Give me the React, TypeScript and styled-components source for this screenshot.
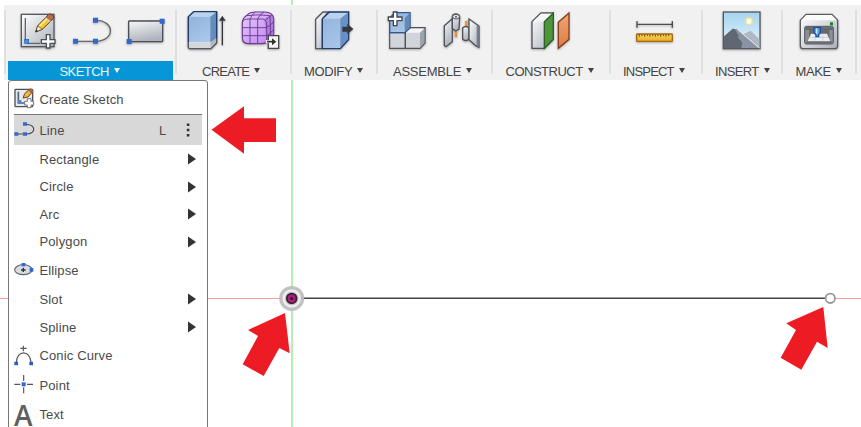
import React from 'react';
import styled, { createGlobalStyle } from 'styled-components';

const GlobalStyle = createGlobalStyle`
  * { box-sizing: border-box; }
  body { margin: 0; background: #fff; overflow: hidden; }
`;

const Workspace = styled.div`
  position: relative;
  width: 861px;
  height: 427px;
  padding: 5px 0 0 4px;
  overflow: hidden;
  background: #fff;
  font-family: 'Liberation Sans', Arial, sans-serif;
  font-size: 13px;
  color: #4a4a4a;
`;

const Drawing = styled.svg`
  position: absolute;
  inset: 0;
  width: 861px;
  height: 427px;
`;

const Toolbar = styled.header`
  position: relative;
  display: flex;
  height: 75px;
  background: #f1f1f1;
`;

const Group = styled.section<{ $width: number }>`
  display: flex;
  flex-direction: column;
  flex: none;
  width: ${(p) => p.$width}px;
  height: 75px;
`;

const Divider = styled.div`
  flex: none;
  width: 2px;
  height: 64px;
  margin-top: 5px;
  background: #dfdfdf;
`;

const IconRow = styled.div<{ $inset: number; $gap: number }>`
  display: flex;
  height: 56px;
  padding: 5px 0 0 ${(p) => p.$inset}px;
  gap: ${(p) => p.$gap}px;
`;

const ToolIcon = styled.svg`
  flex: none;
  width: 40px;
  height: 42px;
  overflow: visible;
  filter: drop-shadow(0 1px 1px rgba(0, 0, 0, 0.3));
`;

const GroupLabel = styled.div<{ $inset: number; $tracking: number; $active?: boolean }>`
  display: flex;
  align-items: center;
  gap: 5px;
  height: 19px;
  margin: 0 ${(p) => (p.$active ? 2 : 0)}px;
  padding: 2px 0 0 ${(p) => p.$inset}px;
  white-space: nowrap;
  letter-spacing: ${(p) => p.$tracking}px;
  color: ${(p) => (p.$active ? '#e8f7ff' : '#444')};
  background: ${(p) => (p.$active ? '#0696d7' : 'transparent')};
`;

const Caret = styled.span`
  width: 0;
  height: 0;
  margin-top: -3px;
  border: 3.5px solid transparent;
  border-top: 5px solid currentColor;
  border-bottom: 0;
`;

const Menu = styled.nav`
  position: absolute;
  left: 8px;
  top: 80px;
  width: 200px;
  height: 360px;
  padding: 0 5px;
  background: #fff;
  border: 1px solid #777;
  border-radius: 3px 3px 0 0;
`;

const MenuRow = styled.div<{ $height: number; $active?: boolean; $top?: number }>`
  display: flex;
  align-items: center;
  height: ${(p) => p.$height}px;
  padding-top: ${(p) => p.$top ?? 0}px;
  background: ${(p) => (p.$active ? '#d8d8d8' : 'transparent')};
`;

const Separator = styled.div`
  height: 1px;
  background: #777;
`;

const IconSlot = styled.span`
  display: flex;
  flex: none;
  width: 25px;
`;

const MenuIcon = styled.svg`
  width: 20px;
  height: 22px;
  overflow: visible;
`;

const ItemText = styled.span<{ $tracking: number }>`
  flex: 1;
  padding-left: 0.4px;
  letter-spacing: ${(p) => p.$tracking}px;
  white-space: nowrap;
`;

const Shortcut = styled.span`
  width: 23px;
`;

const RowEnd = styled.svg`
  flex: none;
  width: 20px;
  height: 16px;
`;

const Defs = () => (
  <defs>
    <linearGradient id="steel" x1="0" y1="0" x2="1" y2="1">
      <stop offset="0" stopColor="#fff" /><stop offset="1" stopColor="#a9afba" />
    </linearGradient>
    <linearGradient id="panel" x1="0" y1="0" x2="0.3" y2="1">
      <stop offset="0" stopColor="#f6f7f8" /><stop offset="1" stopColor="#aeb4be" />
    </linearGradient>
    <linearGradient id="blue" x1="0" y1="0" x2="0.6" y2="1">
      <stop offset="0" stopColor="#8fb2db" /><stop offset="1" stopColor="#a9c6e8" />
    </linearGradient>
    <linearGradient id="sky" x1="0" y1="0" x2="0" y2="1">
      <stop offset="0" stopColor="#a5d4ee" /><stop offset="1" stopColor="#e8f6fc" />
    </linearGradient>
    <linearGradient id="violet" x1="0" y1="0" x2="1" y2="1">
      <stop offset="0" stopColor="#e6cdfa" /><stop offset="1" stopColor="#bd80f2" />
    </linearGradient>
    <linearGradient id="orange" x1="0" y1="0" x2="0" y2="1">
      <stop offset="0" stopColor="#eda678" /><stop offset="1" stopColor="#dc7d43" />
    </linearGradient>
    <linearGradient id="gold" x1="0" y1="0" x2="0" y2="1">
      <stop offset="0" stopColor="#f8d45b" /><stop offset="1" stopColor="#e9ae1e" />
    </linearGradient>
  </defs>
);

const SketchIcon = () => (
  <ToolIcon viewBox="54 30 120 126">
    <rect x="64" y="43" width="98" height="97" fill="url(#steel)" stroke="#55585d" strokeWidth="4" />
    <path d="M76 54V122M80 130H120" stroke="#666" strokeWidth="4" />
    <rect x="74" y="118" width="12" height="12" fill="#3f92e0" stroke="#1c5fb0" strokeWidth="2" />
    <path d="M107 96L113 77L145 45L159 57L127 88Z" fill="#f4c430" stroke="#5c4522" strokeWidth="3" />
    <path d="M118 79L148 50" stroke="#ffe98d" strokeWidth="5" />
    <path d="M107 96L113 77L127 88Z" fill="#f4dfbc" stroke="#4b4131" strokeWidth="2" />
    <path d="M107 96L109 89L114 93Z" fill="#222" />
    <path d="M138 51L145 44Q149 39 157 45T159 57L152 64Z" fill="#b96f4b" stroke="#68442f" strokeWidth="3" />
    <path d="M137 53L151 65" stroke="#d9d9d9" strokeWidth="4" />
    <path d="M139 104H150V119H165V130H150V144H139V130H124V119H139Z" fill="#fff" stroke="#4d5054" strokeWidth="4" />
  </ToolIcon>
);
const LineIcon = () => (
  <ToolIcon viewBox="216 30 120 126">
    <path d="M227 124H287C346 124 346 61 287 61" fill="none" stroke="#65676a" strokeWidth="4" />
    <path d="M219 116h15v15h-15zM279 116h15v15h-15zM279 53h15v15h-15z" fill="#3267d1" />
  </ToolIcon>
);
const RectangleIcon = () => (
  <ToolIcon viewBox="378 30 120 126">
    <rect x="386" y="63" width="102" height="62" rx="2" fill="url(#panel)" stroke="#4d4f53" strokeWidth="4" />
    <path d="M479 56h15v15h-15zM380 117h15v15h-15z" fill="#3267d1" />
  </ToolIcon>
);
const ExtrudeIcon = () => (
  <ToolIcon viewBox="48 30 120 126">
    <path d="M55 50L71 35H140V129L123 146H59Q55 146 55 141Z" fill="#f3f4f5" stroke="#555" strokeWidth="3" />
    <path d="M55 127H121V144H59Q55 144 55 140Z" fill="#d4d7dc" />
    <path d="M121 50L140 35V129L121 146Z" fill="#b5bac1" />
    <path d="M55 50L71 35H140L121 50Z" fill="#bcd3ed" />
    <path d="M55 50H121V126H55Z" fill="url(#blue)" />
    <path d="M121 50L140 35V114L121 127Z" fill="#638dbe" />
    <path d="M55 126V50L71 35H140V114" fill="none" stroke="#203b67" strokeWidth="4" strokeLinejoin="round" />
    <path d="M55 126V141Q55 146 60 146H123L140 129V114" fill="none" stroke="#55585e" strokeWidth="4" />
    <path d="M157 136V56" stroke="#36383c" strokeWidth="4" />
    <path d="M147 62L157 47L167 62Z" fill="#36383c" />
  </ToolIcon>
);
const FormIcon = () => (
  <ToolIcon viewBox="210 30 120 126">
    <path d="M217 69Q217 54 232 45Q239 36 258 36H284Q308 36 311 56V103Q308 115 294 124Q288 131 276 131H237Q217 131 217 113Z" fill="url(#violet)" stroke="#6c3a8f" strokeWidth="3.5" />
    <path d="M283 57Q303 42 309 50L311 100Q307 115 290 126Z" fill="#a369d5" opacity=".6" />
    <path d="M217 67Q220 57 237 57H276Q290 57 290 75V115Q289 131 276 131M217 83H288Q304 77 311 64M217 107H290Q304 99 311 88M240 131V57Q245 44 256 36M263 131V57Q268 44 282 36M229 47Q264 42 300 47L302 116M286 61Q295 51 307 45" fill="none" stroke="#6c3a8f" strokeWidth="2.8" />
    <path d="M295 107H326V145H295Z" fill="#f5f5f5" stroke="#45474a" strokeWidth="4" />
    <path d="M287 125H304" stroke="#f5f5f5" strokeWidth="9" />
    <path d="M291 125H309" stroke="#303236" strokeWidth="5" />
    <path d="M306 115L319 125L306 136Z" fill="#303236" />
  </ToolIcon>
);
const ModifyIcon = () => (
  <ToolIcon viewBox="432 30 120 126">
    <path d="M437 58L459 36H476L457 58V146H437Z" fill="url(#steel)" stroke="#55585d" strokeWidth="4" />
    <path d="M457 56L478 36H536V119L511 146H457Z" fill="url(#blue)" />
    <path d="M459 56L478 38H534L511 56Z" fill="#b9d2ef" />
    <path d="M511 56L536 36V119L511 146Z" fill="#6992c4" />
    <path d="M457 56L478 36H536V119" fill="none" stroke="#203b67" strokeWidth="4" />
    <path d="M536 119L511 146H457V56" fill="none" stroke="#203b67" strokeWidth="4" />
    <path d="M517 80H532V71L550 87L532 103V95H517Z" fill="#34373b" />
  </ToolIcon>
);
const ComponentIcon = () => (
  <ToolIcon viewBox="51 30 120 126">
    <path d="M59 98H106V145H59Z" fill="#d1d4da" stroke="#505359" strokeWidth="3.5" />
    <path d="M106 97L121 83H165V129L150 145H106Z" fill="#d1d4da" stroke="#505359" strokeWidth="4" />
    <path d="M108 98L121 86H163L150 98Z" fill="#f4f5f6" />
    <path d="M150 98L163 86V129L150 143Z" fill="#9da3ae" />
    <path d="M59 98V54L75 38H120V83L104 98Z" fill="url(#blue)" stroke="#2e588e" strokeWidth="4" />
    <path d="M104 54L118 40V83L104 96Z" fill="#6389b8" />
    <path d="M70 36H81V51H96V62H81V77H70V62H55V51H70Z" fill="#fff" stroke="#42484f" strokeWidth="4" />
  </ToolIcon>
);
const JointIcon = () => (
  <ToolIcon viewBox="219 30 120 126">
    <path d="M258 84V112M289 62V94" stroke="#f18b3d" strokeWidth="7" />
    <path d="M223 77L247 56V125L228 140L223 136Z" fill="url(#panel)" stroke="#505359" strokeWidth="4" />
    <path d="M247 50Q248 42 258 42Q270 44 269 53L267 87L257 93L247 86Z" fill="url(#panel)" stroke="#505359" strokeWidth="4" />
    <ellipse cx="258" cy="50" rx="10" ry="7" fill="#eee" stroke="#505359" strokeWidth="3" />
    <circle cx="258" cy="50" r="3" fill="#555" />
    <path d="M278 84Q287 75 297 84V117Q287 127 278 117Z" fill="url(#panel)" stroke="#505359" strokeWidth="4" />
    <path d="M297 57L327 78V142L316 136L297 119Z" fill="url(#steel)" stroke="#505359" strokeWidth="4" />
    <path d="M320 77L326 78V141L320 137Z" fill="#757e8c" />
  </ToolIcon>
);
const ConstructIcon = () => (
  <ToolIcon viewBox="474 30 120 126">
    <path d="M486 65L513 39H550V118L523 145H486Z" fill="url(#steel)" stroke="#4f5257" strokeWidth="4" />
    <path d="M488 65L513 41H548L523 65Z" fill="#f5f6f6" />
    <path d="M523 65L550 39V118L523 145Z" fill="#4f933c" stroke="#286422" strokeWidth="4" />
    <path d="M565 67L597 39V118L565 145Z" fill="url(#orange)" stroke="#873c17" strokeWidth="4" />
  </ToolIcon>
);
const MeasureIcon = () => (
  <ToolIcon viewBox="102 30 120 126">
    <path d="M111 73H217M111 63V83M217 63V83" stroke="#4c4e51" strokeWidth="4" />
    <rect x="110" y="102" width="107" height="22" rx="2" fill="url(#gold)" stroke="#a66913" strokeWidth="4" />
    <path d="M118 103v7M126 103v5M134 103v7M142 103v5M150 103v7M158 103v5M166 103v7M174 103v5M182 103v7M190 103v5M198 103v7M206 103v5" stroke="#744819" strokeWidth="3" />
  </ToolIcon>
);
const InsertIcon = () => (
  <ToolIcon viewBox="363 30 120 126">
    <rect x="370" y="36" width="110" height="110" fill="url(#sky)" stroke="#55585e" strokeWidth="4" />
    <rect x="438" y="54" width="18" height="19" rx="5" fill="#fffdf0" stroke="#f5df95" strokeWidth="4" />
    <path d="M426 104L452 92L478 117V144H460Z" fill="#aeb9c5" />
    <path d="M372 109L398 86L411 88L478 144H372Z" fill="#5f6773" />
    <path d="M404 87L418 110L411 109L427 128L424 144H478L412 88Z" fill="#8993a4" />
    <path d="M412 88L478 144" stroke="#edf0f2" strokeWidth="3" />
  </ToolIcon>
);
const MakeIcon = () => (
  <ToolIcon viewBox="597 30 120 126">
    <path d="M601 61L618 43H696L713 61V137Q713 146 704 146H609Q601 146 601 137Z" fill="url(#steel)" stroke="#5b5c5f" strokeWidth="4" />
    <path d="M604 61L619 45H695L710 61Z" fill="#fafafa" />
    <rect x="614" y="79" width="86" height="53" rx="5" fill="#8a8e95" stroke="#54565b" strokeWidth="3" />
    <path d="M616 82H698V90H688V119L698 130H616L627 119V90H616Z" fill="#65686d" />
    <path d="M633 101H681L691 124H623Z" fill="#eceef1" />
    <path d="M629 112H687M648 101L643 124M665 101L670 124" stroke="#bfc4cb" strokeWidth="2" />
    <path d="M642 83H661V98L656 104V110H648V104L642 98Z" fill="#62a3da" stroke="#174f9c" strokeWidth="4" />
    <path d="M650 85V101" stroke="#c4e7ff" strokeWidth="4" />
    <rect x="690" y="67" width="9" height="9" fill="#17831e" />
  </ToolIcon>
);

type ToolGroup = {
  name: string; width: number; iconInset: number; gap?: number;
  labelInset: number; tracking: number; active?: boolean; icons: React.FC[];
};

const groups: ToolGroup[] = [
  { name: 'SKETCH', width: 169, iconInset: 12, gap: 14, labelInset: 51.5, tracking: -0.55, active: true, icons: [SketchIcon, LineIcon, RectangleIcon] },
  { name: 'CREATE', width: 113, iconInset: 9, gap: 14, labelInset: 25, tracking: -0.75, icons: [ExtrudeIcon, FormIcon] },
  { name: 'MODIFY', width: 84, iconInset: 22, labelInset: 12, tracking: -0.4, icons: [ModifyIcon] },
  { name: 'ASSEMBLE', width: 113, iconInset: 9, gap: 16, labelInset: 15, tracking: -0.25, icons: [ComponentIcon, JointIcon] },
  { name: 'CONSTRUCT', width: 116, iconInset: 35, labelInset: 12.5, tracking: -0.5, icons: [ConstructIcon] },
  { name: 'INSPECT', width: 90, iconInset: 23, labelInset: 12, tracking: -0.8, icons: [MeasureIcon] },
  { name: 'INSERT', width: 78, iconInset: 18, labelInset: 12, tracking: -0.65, icons: [InsertIcon] },
  { name: 'MAKE', width: 72, iconInset: 16, labelInset: 12.5, tracking: -0.4, icons: [MakeIcon] },
];

const MenuSketchIcon = () => (
  <MenuIcon viewBox="42 32 60 66">
    <rect x="45" y="36" width="53" height="52" rx="2" fill="#e6e9ee" stroke="#505257" strokeWidth="4" />
    <path d="M55 43V77H76" fill="none" stroke="#53647d" strokeWidth="5" />
    <rect x="54" y="68" width="10" height="11" fill="#5286c8" />
    <path d="M69 62L74 49L88 36Q97 33 98 43L84 59Z" fill="#efb83b" stroke="#694527" strokeWidth="3" />
    <path d="M85 38Q94 30 98 38T93 48Z" fill="#aa6045" />
    <path d="M82 64H93V72H101V83H93V91H82V83H74V72H82Z" fill="#fff" stroke="#74777b" strokeWidth="3" />
  </MenuIcon>
);
const MenuLineIcon = () => (
  <MenuIcon viewBox="42 124 60 66">
    <path d="M49 169H79C109 169 109 140 77 140" fill="none" stroke="#4a4c50" strokeWidth="3.5" />
    <path d="M43 164h12v10H43zM69 164h12v10H69zM69 134h12v10H69z" fill="#3568cf" />
  </MenuIcon>
);
const MenuEllipseIcon = () => (
  <MenuIcon viewBox="42 206 60 66">
    <ellipse cx="70" cy="238" rx="26" ry="15" fill="#d9dce2" stroke="#63666c" strokeWidth="3.5" />
    <path d="M70 232V245M63 239H77" stroke="#303236" strokeWidth="4" />
    <path d="M65 218h11v10H65zM89 233h11v11H89z" fill="#2f67da" />
  </MenuIcon>
);
const ConicIcon = () => (
  <MenuIcon viewBox="42 105 60 66">
    <path d="M49 157C51 119 90 119 93 157M70 107V124M61 115H80" fill="none" stroke="#53565a" strokeWidth="3.5" />
    <path d="M43 155h11v11H43zM88 155h11v11H88z" fill="#3059c9" />
  </MenuIcon>
);
const PointIcon = () => (
  <MenuIcon viewBox="42 193 60 66">
    <path d="M71 196V214M71 233V251M43 224H61M81 224H99" stroke="#54575b" strokeWidth="3.5" />
    <rect x="65" y="218" width="12" height="12" fill="#3568cf" />
  </MenuIcon>
);
const LetterMark = styled.span`
  font: 600 28px/22px 'Open Sans', 'Noto Sans', sans-serif;
  color: #5f5f5f;
`;
const TextIcon = () => <LetterMark>A</LetterMark>;

type Item = { label: string; height: number; submenu?: boolean; icon?: React.FC };

const items: Item[] = [
  { label: 'Rectangle', height: 28, submenu: true },
  { label: 'Circle', height: 27, submenu: true },
  { label: 'Arc', height: 28, submenu: true },
  { label: 'Polygon', height: 27, submenu: true },
  { label: 'Ellipse', height: 30, icon: MenuEllipseIcon },
  { label: 'Slot', height: 28, submenu: true },
  { label: 'Spline', height: 28, submenu: true },
  { label: 'Conic Curve', height: 29, icon: ConicIcon },
  { label: 'Point', height: 30, icon: PointIcon },
  { label: 'Text', height: 29, icon: TextIcon },
];

const SketchCanvas = () => (
  <Drawing viewBox="0 0 861 427">
    <Defs />
    <path d="M292 0V427" stroke="#b4f0b4" strokeWidth="2" />
    <path d="M0 298.5H861" stroke="#f69a9a" strokeWidth="1.2" />
    <path d="M292 298.3H825" stroke="#444" strokeWidth="1.6" />
    <circle cx="291.7" cy="298.4" r="12.5" fill="#bbb" opacity=".9" />
    <circle cx="291.7" cy="298.4" r="8" fill="none" stroke="#eeeeee" strokeWidth="2.5" />
    <circle cx="291.7" cy="298.4" r="4.8" fill="#b51b87" stroke="#302330" strokeWidth="1.8" />
    <circle cx="291.7" cy="298.4" r="1.5" fill="#351028" />
    <circle cx="830.3" cy="298.3" r="4.7" fill="#fff" stroke="#999" strokeWidth="1.8" />
    <g fill="#ed1c24">
      <path d="M211.5 129.7L244 106.3V118.3H276V142H244V153.7Z" />
      <path d="M285 313L289.7 353.3L279.3 348L263.7 376L242.7 364.3L258 336L248 330Z" />
      <path d="M823.3 307L827.7 348L817 341.7L801.3 369.7L780.7 357.7L796 330L786.3 323.3Z" />
    </g>
  </Drawing>
);

export default function App() {
  return (
    <>
      <GlobalStyle />
      <Workspace>
        <SketchCanvas />
        <Toolbar>
          {groups.map((g) => (
            <React.Fragment key={g.name}>
              <Divider />
              <Group $width={g.width}>
                <IconRow $inset={g.iconInset} $gap={g.gap ?? 0}>
                  {g.icons.map((Icon, i) => <Icon key={i} />)}
                </IconRow>
                <GroupLabel $inset={g.labelInset} $tracking={g.tracking} $active={g.active}>
                  {g.name}<Caret />
                </GroupLabel>
              </Group>
            </React.Fragment>
          ))}
          <Divider />
        </Toolbar>
        <Menu>
          <MenuRow $height={33} $top={3}>
            <IconSlot><MenuSketchIcon /></IconSlot>
            <ItemText $tracking={0.15}>Create Sketch</ItemText>
          </MenuRow>
          <Separator />
          <MenuRow $height={30} $active>
            <IconSlot><MenuLineIcon /></IconSlot>
            <ItemText $tracking={0.15}>Line</ItemText>
            <Shortcut>L</Shortcut>
            <RowEnd viewBox="0 0 20 16"><path d="M4.8 1.5h2.6v2.6H4.8zM4.8 6.7h2.6v2.6H4.8zM4.8 11.9h2.6v2.6H4.8z" fill="#333" /></RowEnd>
          </MenuRow>
          {items.map(({ label, height, submenu, icon: Icon }) => (
            <MenuRow key={label} $height={height}>
              <IconSlot>{Icon && <Icon />}</IconSlot>
              <ItemText $tracking={0.15}>{label}</ItemText>
              {submenu && <RowEnd viewBox="0 0 20 16"><path d="M6 2.5L14 8L6 13.5Z" fill="#333" /></RowEnd>}
            </MenuRow>
          ))}
        </Menu>
      </Workspace>
    </>
  );
}
